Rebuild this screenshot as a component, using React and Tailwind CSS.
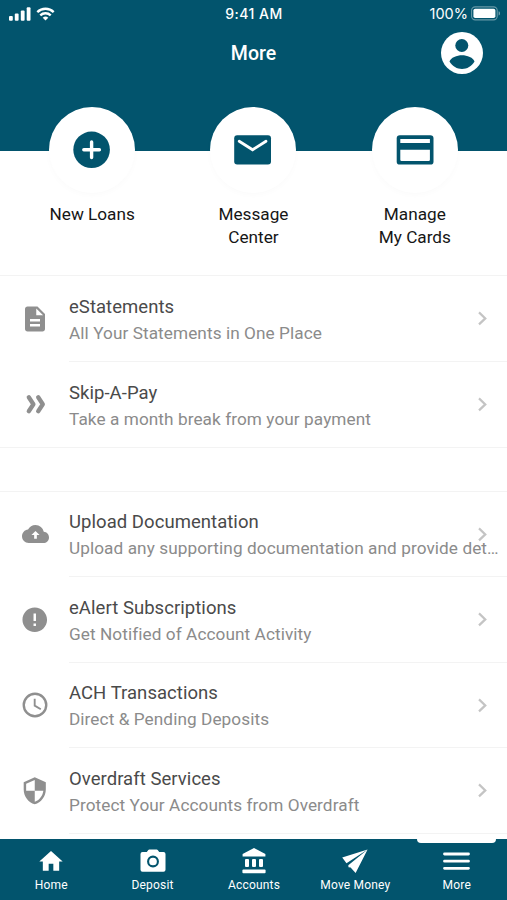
import React from "react";
import clsx from "clsx";

const shortcuts = [
  { icon: <PlusIcon />, lines: ["New Loans"] },
  { icon: <MailIcon />, lines: ["Message", "Center"] },
  { icon: <CardIcon />, lines: ["Manage", "My Cards"] },
];

const statementItems = [
  {
    icon: <DocumentIcon />,
    title: "eStatements",
    text: "All Your Statements in One Place",
  },
  {
    icon: <SkipIcon />,
    title: "Skip-A-Pay",
    text: "Take a month break from your payment",
  },
];

const serviceItems = [
  {
    icon: <CloudIcon />,
    title: "Upload Documentation",
    text: "Upload any supporting documentation and provide det…",
  },
  {
    icon: <AlertIcon />,
    title: "eAlert Subscriptions",
    text: "Get Notified of Account Activity",
  },
  {
    icon: <ClockIcon />,
    title: "ACH Transactions",
    text: "Direct & Pending Deposits",
  },
  {
    icon: <ShieldIcon />,
    title: "Overdraft Services",
    text: "Protect Your Accounts from Overdraft",
  },
];

const tabs = [
  { icon: <HomeIcon />, label: "Home" },
  { icon: <CameraIcon />, label: "Deposit" },
  { icon: <BankIcon />, label: "Accounts" },
  { icon: <SendIcon />, label: "Move Money" },
  { icon: <MenuIcon />, label: "More", active: true },
];

function PlusIcon() {
  return (
    <svg width="38" height="38" viewBox="0 0 38 38">
      <circle cx="18.6" cy="18.8" r="18.3" fill="#02546d" />
      <path d="M18.6 11v15.6M10.800 18.800h15.6" stroke="#fff" strokeWidth="3.4" strokeLinecap="round" />
    </svg>
  );
}

function MailIcon() {
  return (
    <svg width="38" height="30" viewBox="0 0 38 30">
      <rect x="0.2" y="0.2" width="36.8" height="29.4" rx="3" fill="#02546d" />
      <path d="M5.2 6.2 18.600 14.800 32 6.2" fill="none" stroke="#fff" strokeWidth="2.8" strokeLinecap="round" />
    </svg>
  );
}

function CardIcon() {
  return (
    <svg width="38" height="30" viewBox="0 0 38 30">
      <rect x="0.7" y="0.2" width="36.8" height="29.4" rx="3.2" fill="#02546d" />
      <path d="M4.3 4h29.6v4H4.3zM4.3 14.8h29.6v9.9a1.2 1.2 0 0 1-1.2 1.2H5.5a1.2 1.2 0 0 1-1.2-1.2z" fill="#fff" />
    </svg>
  );
}

function DocumentIcon() {
  return (
    <svg width="30" height="30" viewBox="0 0 24 24" fill="#8f8f8f">
      <path d="M14 2H6c-1.1 0-2 .9-2 2v16c0 1.1.9 2 2 2h12c1.1 0 2-.9 2-2V8l-6-6zm2 16H8v-2h8v2zm0-4H8v-2h8v2zm-3-5V3.5L18.5 9H13z" />
    </svg>
  );
}

function SkipIcon() {
  return (
    <svg width="30" height="30" viewBox="0 0 30 30" fill="none" stroke="#8f8f8f" strokeWidth="4.3">
      <path d="M8.8 8.3 13.4 15.300 8.8 22.3M18.2 8.3 22.8 15.300 18.2 22.3" strokeLinecap="round" strokeLinejoin="round" />
    </svg>
  );
}

function CloudIcon() {
  return (
    <svg width="27" height="27" viewBox="0 0 24 24" fill="#8f8f8f">
      <path d="M19.35 9.64C18.67 6.19 15.64 3.6 12 3.6 9.11 3.6 6.6 5.24 5.35 7.64 2.34 7.96 0 10.51 0 13.6c0 3.31 2.69 6 6 6h13c2.76 0 5-2.24 5-5 0-2.64-2.05-4.78-4.65-4.96z" />
      <path d="M13.2 12.4v3.4h-2.4v-3.4H8.4L12 8.8l3.6 3.6z" fill="#fff" />
    </svg>
  );
}

function AlertIcon() {
  return (
    <svg width="29.5" height="29.5" viewBox="0 0 24 24" fill="#8f8f8f">
      <path d="M12 2C6.48 2 2 6.48 2 12s4.48 10 10 10 10-4.48 10-10S17.52 2 12 2zm1 15h-2v-2h2v2zm0-4h-2V7h2v6z" />
    </svg>
  );
}

function ClockIcon() {
  return (
    <svg width="30" height="30" viewBox="0 0 24 24" fill="none" stroke="#8f8f8f">
      <circle cx="12" cy="12" r="9" strokeWidth="1.9" />
      <path d="M11.75 7v5.5l4.9 2.9" strokeWidth="1.5" />
    </svg>
  );
}

function ShieldIcon() {
  return (
    <svg width="29.5" height="29.5" viewBox="0 0 24 24" fill="#8f8f8f">
      <path d="M12 1 3 5v6c0 5.55 3.84 10.74 9 12 5.16-1.26 9-6.45 9-12V5l-9-4zm0 10.99h7c-.53 4.12-3.28 7.79-7 8.94V12H5V6.3l7-3.11v8.8z" />
    </svg>
  );
}

function HomeIcon() {
  return (
    <svg width="28" height="28" viewBox="0 0 24 24" fill="#fff">
      <path d="M10 20.400v-6h4v6h5v-8h3L12 3.400 2 12.400h3v8z" />
    </svg>
  );
}

function CameraIcon() {
  return (
    <svg width="28" height="28" viewBox="0 0 28 28">
      <path
        d="M3.5 5h4.3l1.5-1.900a1.2 1.2 0 0 1 1-.5h7.4a1.2 1.2 0 0 1 1 .5l1.5 1.900h4.3a2 2 0 0 1 2 2v15.800a2 2 0 0 1-2 2h-21a2 2 0 0 1-2-2V7a2 2 0 0 1 2-2z"
        fill="#fff"
      />
      <circle cx="14" cy="14.5" r="4.9" fill="none" stroke="#02546d" strokeWidth="2.1" />
    </svg>
  );
}

function BankIcon() {
  return (
    <svg width="28" height="28" viewBox="0 0 28 28" fill="#fff">
      <path d="M14 1 25.4 7v2.500H2.600V7z" />
      <rect x="5" y="12" width="4" height="8" rx="1" />
      <rect x="12" y="12" width="4" height="8" rx="1" />
      <rect x="19" y="12" width="4" height="8" rx="1" />
      <rect x="2.400" y="22.600" width="23.200" height="3.600" rx="1" />
    </svg>
  );
}

function SendIcon() {
  return (
    <svg width="28" height="28" viewBox="0 0 28 28" fill="#fff">
      <path d="M26.6 2.6 1.2 10.6 5.5 16.200zM26.6 2.6 7.3 18.2 7.5 20.3 9.6 20.4 14.6 26z" />
    </svg>
  );
}

function MenuIcon() {
  return (
    <svg width="28" height="28" viewBox="0 0 28 28" stroke="#fff" strokeWidth="2.8">
      <path d="M1.500 7h24M1.500 14.200h24M1.500 21.300h24" strokeLinecap="round" />
    </svg>
  );
}

function SignalIcon() {
  return (
    <svg width="22" height="14" viewBox="0 0 22 14" fill="#fff">
      <rect x="0" y="9" width="3.8" height="4.8" rx="1" />
      <rect x="5.8" y="6.6" width="3.8" height="7.2" rx="1" />
      <rect x="11.8" y="3.6" width="3.8" height="10.2" rx="1" />
      <rect x="17.7" y="0.2" width="3.8" height="13.6" rx="1" />
    </svg>
  );
}

function WifiIcon() {
  return (
    <svg width="19" height="14" viewBox="0 0 19 14" fill="none" stroke="#fff" strokeWidth="2.4">
      <path d="M1.3 5.1a11.9 11.9 0 0 1 16.4 0" />
      <path d="M4.3 8.3a7.5 7.5 0 0 1 10.4 0" />
      <path d="M9.5 13.6 6.7 10.8a4.1 4.1 0 0 1 5.6 0z" fill="#fff" stroke="none" />
    </svg>
  );
}

function BatteryIcon() {
  return (
    <svg width="30" height="15" viewBox="0 0 30 15">
      <rect x="0.6" y="0.9" width="25.6" height="13" rx="3.6" fill="none" stroke="#fff" strokeOpacity="0.4" strokeWidth="1.1" />
      <rect x="2.4" y="2.8" width="22" height="9.2" rx="1.8" fill="#fff" />
      <path d="M27.6 5.2c1.9.6 1.9 3.8 0 4.4z" fill="#fff" fillOpacity="0.45" />
    </svg>
  );
}

function ProfileIcon() {
  return (
    <svg width="42" height="42" viewBox="0 0 42 42">
      <circle cx="21" cy="21" r="21" fill="#fff" />
      <circle cx="20.8" cy="13.5" r="6.5" fill="#02546d" />
      <path d="M8.5 29.5C9.500 25.5 16 23.2 21 23.2s11.5 2.3 12.5 6.3C30.500 34.300 26 37 21 37S11.5 34.3 8.5 29.5z" fill="#02546d" />
    </svg>
  );
}

const StatusBar = () => {
  return (
    <div className="grid h-[27px] grid-cols-3 items-center pl-[9px] pr-[6px]">
      <div className="flex items-center gap-[5px]">
        <SignalIcon />
        <WifiIcon />
      </div>
      <span className="pr-0.5 text-center font-['Inter'] text-[14px] font-medium tracking-[0.5px]">
        9:41 AM
      </span>
      <div className="flex items-center justify-end gap-[3px]">
        <span className="font-['Inter'] text-[14.5px]">100%</span>
        <BatteryIcon />
      </div>
    </div>
  );
};

const ListRow = ({ icon, title, text, last }) => {
  return (
    <li className="flex h-[85.5px] shrink-0">
      <div className="flex w-[69px] items-center justify-center pl-px">{icon}</div>
      <div className={clsx("flex min-w-0 flex-1 items-center", !last && "border-b border-[#f3f3f3]")}>
        <div className="min-w-0 flex-1 whitespace-nowrap pt-[2.5px]">
          <p className="text-[18.5px] leading-[26px] tracking-[0.05px] text-[#4a4a4a]">{title}</p>
          <p className="text-[17.2px] leading-[26px] tracking-[0.08px] text-[#8b8b8b]">{text}</p>
        </div>
        <svg className="-ml-[30px] mr-[19px] shrink-0" width="11" height="16" viewBox="0 0 11 16">
          <path d="M2 2.4 8.3 8.4 2 14.4" fill="none" stroke="#c4c4c4" strokeWidth="2.2" />
        </svg>
      </div>
    </li>
  );
};

const App = () => {
  return (
    <div className="flex h-[900px] w-[507px] flex-col overflow-hidden bg-white font-['Roboto',sans-serif]">
      <header className="h-[151px] shrink-0 bg-[#02546d] text-white">
        <StatusBar />
        <div className="grid h-[51px] grid-cols-[1fr_auto_1fr] items-center pr-6">
          <h1 className="col-start-2 pl-6 pt-0.5 text-[19.5px] font-medium">More</h1>
          <button className="justify-self-end">
            <ProfileIcon />
          </button>
        </div>
      </header>

      <section className="-mt-11 grid h-[168px] shrink-0 grid-cols-3 px-[11.5px]">
        {shortcuts.map((item) => (
          <div key={item.lines[0]} className="flex flex-col items-center">
            <div className="flex size-[86px] items-center justify-center rounded-full bg-white shadow-[0_2px_6px_rgba(0,0,0,0.02)]">
              {item.icon}
            </div>
            <p className="mt-[10px] text-center text-[17.2px] leading-[22.5px] text-[#161616]">
              {item.lines.map((line) => (
                <span key={line} className="block">
                  {line}
                </span>
              ))}
            </p>
          </div>
        ))}
      </section>

      <main className="min-h-0 flex-1 overflow-hidden">
        <ul className="border-y border-[#f3f3f3]">
          {statementItems.map((item, i) => (
            <ListRow key={item.title} {...item} last={i === statementItems.length - 1} />
          ))}
        </ul>
        <ul className="mt-[42.5px] border-t border-[#f3f3f3]">
          {serviceItems.map((item) => (
            <ListRow key={item.title} {...item} />
          ))}
        </ul>
      </main>

      <nav className="grid h-[61.5px] shrink-0 grid-cols-5 bg-[#02546d] text-white">
        {tabs.map((tab) => (
          <button key={tab.label} className="relative flex flex-col items-center pl-px pt-2">
            {tab.active && (
              <span className="absolute top-0 h-1 w-[79px] rounded-b-[4px] bg-white" />
            )}
            {tab.icon}
            <span className="mt-[2px] whitespace-nowrap text-[12px] leading-4 tracking-[0.2px]">
              {tab.label}
            </span>
          </button>
        ))}
      </nav>
    </div>
  );
};

export default App;
